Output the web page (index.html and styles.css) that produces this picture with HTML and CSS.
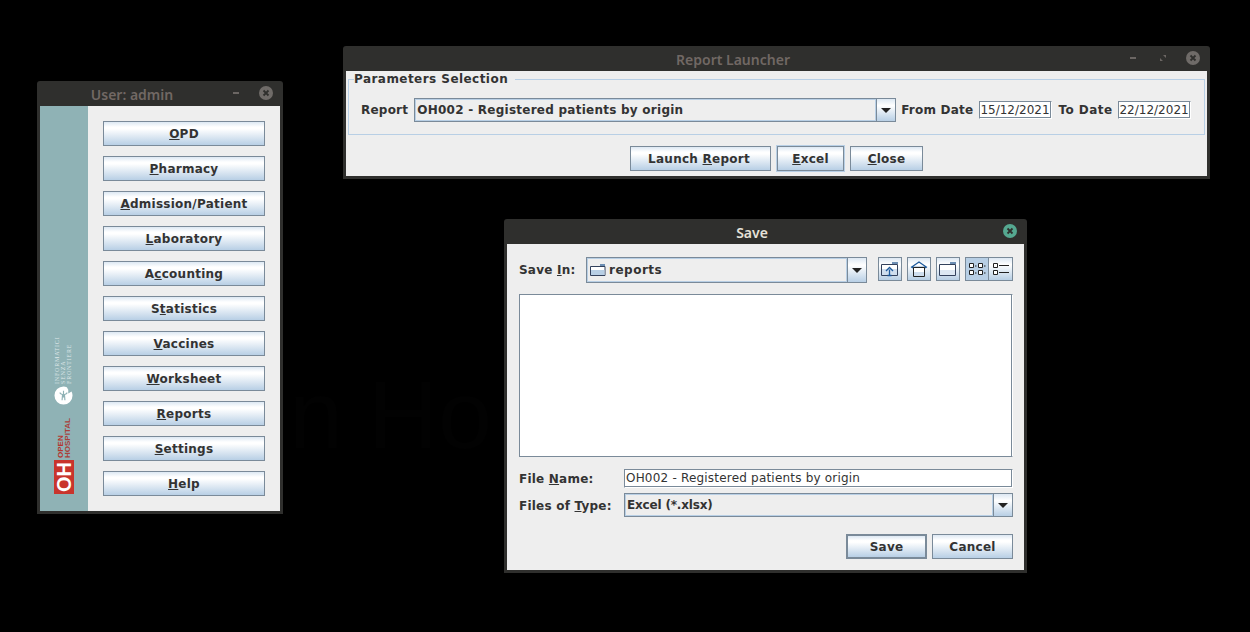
FILE: index.html
```html
<!DOCTYPE html>
<html lang="en">
<head>
<meta charset="utf-8">
<title>Open Hospital</title>
<link rel="stylesheet" href="styles.css">
</head>
<body>
<div class="wallpaper"><span>n Ho</span></div>

<section class="win win-main">
  <header class="titlebar inactive">
    <span class="title title-main">User: admin</span>
    <span class="wm wm-min"></span>
    <span class="wm-close"><svg viewBox="0 0 14 14"><path d="M4.5 4.5l5 5M9.5 4.5l-5 5"/></svg></span>
  </header>
  <div class="win-body main-body">
    <aside class="sidebar">
      <div class="isf">
        <div class="isf-text"><span>INFORMATICI</span><span>SENZA</span><span>FRONTIERE</span></div>
        <svg class="isf-mark" viewBox="0 0 20 20"><path d="M10 .5a9.500 9.500 0 1 0 9.500 9.500c0-1.500-.4-3-1-4.200L15 8V4l-1.500-2.800A9.500 9.500 0 0 0 10 .5z" fill="#fff"/><path d="M6 7c1 1.500 2 2 3 2l-.5 6M14 7c-1 1.500-2 2-3 2l.5 6M10 5v7" fill="none" stroke="#8fb2b5" stroke-width="1.200"/></svg>
      </div>
      <div class="oh">
        <div class="oh-words"><span class="oh-open">OPEN</span><span class="oh-hosp">HOSPITAL</span></div>
        <div class="oh-box"><span>OH</span></div>
      </div>
    </aside>
    <nav class="menu">
      <button class="btn"><u>O</u>PD</button>
      <button class="btn"><u>P</u>harmacy</button>
      <button class="btn"><u>A</u>dmission/Patient</button>
      <button class="btn"><u>L</u>aboratory</button>
      <button class="btn">A<u>c</u>counting</button>
      <button class="btn">S<u>t</u>atistics</button>
      <button class="btn"><u>V</u>accines</button>
      <button class="btn"><u>W</u>orksheet</button>
      <button class="btn"><u>R</u>eports</button>
      <button class="btn"><u>S</u>ettings</button>
      <button class="btn"><u>H</u>elp</button>
    </nav>
  </div>
</section>

<section class="win win-report">
  <header class="titlebar inactive">
    <span class="title title-report">Report Launcher</span>
    <span class="wm wm-min"></span>
    <span class="wm wm-max"><svg viewBox="0 0 8 8"><path d="M4 1h3v3zM4 7H1V4z"/></svg></span>
    <span class="wm-close"><svg viewBox="0 0 14 14"><path d="M4.500 4.500l5 5M9.500 4.500l-5 5"/></svg></span>
  </header>
  <div class="win-body report-body">
    <fieldset class="params">
      <legend>Parameters Selection</legend>
      <label class="lbl">Report</label>
      <div class="combo combo-report">
        <span class="combo-value">OH002 - Registered patients by origin</span>
        <span class="combo-arrow"><i></i></span>
      </div>
      <label class="lbl lbl-from">From Date</label>
      <span class="field date">15/12/2021</span>
      <label class="lbl lbl-to">To Date</label>
      <span class="field date">22/12/2021</span>
    </fieldset>
    <div class="actions actions-report">
      <button class="btn b-launch">Launch <u>R</u>eport</button>
      <button class="btn b-excel"><u>E</u>xcel</button>
      <button class="btn b-close"><u>C</u>lose</button>
    </div>
  </div>
</section>

<section class="win win-save">
  <header class="titlebar">
    <span class="title title-save">Save</span>
    <span class="wm-close active"><svg viewBox="0 0 14 14"><path d="M4.500 4.500l5 5M9.500 4.500l-5 5"/></svg></span>
  </header>
  <div class="win-body save-body">
    <div class="save-top">
      <label class="lbl lbl-savein">Save <u>I</u>n:</label>
      <div class="combo combo-dir">
        <span class="combo-value dir-value">
          <svg class="folder" viewBox="0 0 16 13"><path d="M10 1h5v2h-5z" fill="#6d8fb4"/><path d="M.5 3.500h14.500v9H.5z" fill="#fff" stroke="#33415c"/><path d="M1 7h13.500v5H1z" fill="#b8cfe5"/></svg>
          reports
        </span>
        <span class="combo-arrow"><i></i></span>
      </div>
      <div class="tools">
        <span class="tool"><svg viewBox="0 0 18 16"><path d="M11 1h6v2h-6z" fill="#6d8fb4"/><path d="M.5 3.500h16v11H.5z" fill="#fff" stroke="#33415c"/><path d="M1 8h15v6H1z" fill="#cfdeee"/><path d="M8.500 14.500V8.500M5 10l3.500-3.500L12 10M6.500 14.500h4" fill="none" stroke="#1e5a9c" stroke-width="1.300"/></svg></span>
        <span class="tool"><svg viewBox="0 0 18 16"><path d="M1 6.500L9 1l8 5.500M2 6.500h14" fill="none" stroke="#1e5a9c" stroke-width="1.300"/><path d="M3.500 6.500h11v9h-11z" fill="#fff" stroke="#222"/><path d="M4 11h10v4H4z" fill="#cfdeee"/></svg></span>
        <span class="tool"><svg viewBox="0 0 18 16"><path d="M11 1h6v2h-6z" fill="#6d8fb4"/><path d="M.5 3.500h16v11H.5z" fill="#fff" stroke="#33415c"/><path d="M1 9h15v5H1z" fill="#dde8f3"/></svg></span>
        <span class="view-toggle">
          <span class="tool tool-on"><svg viewBox="0 0 18 16"><path d="M1.500 2.500h4v4h-4zM10.500 2.500h4v4h-4zM1.500 9.500h4v4h-4zM10.500 9.500h4v4h-4z" fill="#fff" stroke="#222"/><path d="M7 5h1.500M16 5h1.500M7 12h1.500M16 12h1.500" stroke="#222"/></svg></span>
          <span class="tool tool-joined"><svg viewBox="0 0 18 16"><path d="M1.500 2.500h4v4h-4zM1.500 9.500h4v4h-4z" fill="#fff" stroke="#222"/><path d="M7 4.500h10M7 11.500h10" stroke="#222"/></svg></span>
        </span>
      </div>
    </div>
    <div class="filelist"></div>
    <div class="save-form">
      <label class="lbl"><span>File <u>N</u>ame:</span></label>
      <span class="field name-field">OH002 - Registered patients by origin</span>
      <label class="lbl lbl-type"><span>Files of <u>T</u>ype:</span></label>
      <div class="combo combo-type">
        <span class="combo-value type-value">Excel (*.xlsx)</span>
        <span class="combo-arrow"><i></i></span>
      </div>
    </div>
    <div class="actions actions-save">
      <button class="btn b-save">Save</button>
      <button class="btn b-cancel">Cancel</button>
    </div>
  </div>
</section>
</body>
</html>
```

FILE: styles.css
```css
* { box-sizing: border-box; }
html, body { margin: 0; padding: 0; }
body {
  width: 1250px;
  height: 632px;
  background: #000;
  position: relative;
  overflow: hidden;
  font-family: "DejaVu Sans", sans-serif;
  font-size: 12px;
  color: #333;
}
.wallpaper {
  position: absolute;
  left: 283px;
  top: 359px;
  width: 221px;
  overflow: hidden;
  padding-left: 6px;
  font-family: "Liberation Sans", sans-serif;
  font-size: 97px;
  line-height: 112px;
  word-spacing: -2px;
  color: #020202;
  white-space: nowrap;
}

/* windows */
.win {
  position: absolute;
  display: flex;
  flex-direction: column;
  background: #2f2f2d;
  border-radius: 3px 3px 0 0;
  padding: 0 3px 3px;
}
.win-main { left: 37px; top: 81px; width: 246px; height: 433px; }
.win-report { left: 343px; top: 46px; width: 867px; height: 133px; }
.win-save { left: 504px; top: 219px; width: 523px; height: 354px; }
.titlebar {
  height: 25px;
  flex: none;
  display: flex;
  align-items: center;
  justify-content: flex-end;
  position: relative;
}
.title {
  position: absolute;
  top: 4px;
  font-family: "Noto Sans", sans-serif;
  font-size: 14px;
  line-height: 20px;
  font-weight: 600;
  color: #e6e1d8;
  transform: translateX(-50%);
  white-space: nowrap;
}
.inactive .title { color: #716864; }
.title-main { left: 92px; }
.title-report { left: 387px; }
.title-save { left: 245px; }
.wm { width: 14px; height: 14px; position: relative; flex: none; }
.wm-min::before {
  content: "";
  position: absolute;
  left: 3px;
  top: 5px;
  width: 6px;
  height: 2px;
  background: #6b6663;
}
.win-main .wm-min { margin-right: 15px; margin-left: 4px; }
.win-report .wm-min { margin-right: 15px; }
.wm-max { margin-right: 16px; }
.wm-max svg { position: absolute; left: 3px; top: 2px; width: 8px; height: 8px; }
.wm-max path { fill: #6b6663; }
.wm-close {
  width: 14px;
  height: 14px;
  margin-right: 7px;
  margin-top: -2px;
  border-radius: 50%;
  background: #6f6b68;
  flex: none;
  display: block;
}
.wm-close svg { display: block; width: 14px; height: 14px; }
.wm-close path { stroke: #2f2f2d; stroke-width: 1.800; fill: none; }
.wm-close.active { background: #55a890; }
.win-body { flex: 1; background: #eee; min-height: 0; }

/* main menu */
.main-body { display: flex; }
.sidebar {
  width: 48px;
  flex: none;
  background: #8fb2b5;
  display: flex;
  flex-direction: column;
  justify-content: flex-end;
  padding: 0 0 17px 14px;
  gap: 15px;
}
.isf { display: flex; flex-direction: column; gap: 2px; }
.isf-text {
  writing-mode: vertical-rl;
  transform: rotate(180deg);
  font-family: "Liberation Serif", serif;
  font-size: 6px;
  line-height: 6px;
  letter-spacing: .8px;
  color: #dfe8e9;
  height: 46px;
  width: 19px;
  white-space: nowrap;
}
.isf-text span { display: block; }
.isf-mark { width: 19px; height: 19px; display: block; }
.oh { display: flex; flex-direction: column; gap: 2px; }
.oh-words {
  writing-mode: vertical-rl;
  transform: rotate(180deg);
  align-self: flex-start;
  height: 38px;
  width: 20px;
  padding: 0 3px;
  font-family: "Liberation Sans", sans-serif;
  font-weight: 700;
  font-size: 8px;
  line-height: 7px;
  white-space: nowrap;
}
.oh-words span { display: block; }
.oh-open { color: #b5352d; }
.oh-hosp { color: #a8403a; }
.oh-box {
  width: 20px;
  height: 34px;
  background: #c9342c;
  display: flex;
  align-items: center;
  justify-content: center;
}
.oh-box span {
  writing-mode: vertical-rl;
  transform: rotate(180deg);
  font-family: "Liberation Sans", sans-serif;
  font-weight: 700;
  font-size: 20px;
  line-height: 20px;
  color: #fff;
}
.menu {
  flex: 1;
  display: flex;
  flex-direction: column;
  gap: 10px;
  padding: 15px 15px 0;
}

/* controls */
.btn {
  height: 25px;
  flex: none;
  padding: 2px 0 0;
  border: 1px solid #7a8a99;
  background: linear-gradient(#dde8f3 0, #fff 22%, #fff 30%, #b8cfe5 100%);
  font: 700 12px/19px "DejaVu Sans", sans-serif;
  letter-spacing: .25px;
  color: #333;
  text-align: center;
}
.lbl { font-weight: 700; white-space: nowrap; letter-spacing: .22px; color: #333; }
.combo {
  display: flex;
  height: 24px;
  border: 1px solid #7a8a99;
  background: #fff;
  flex: none;
}
.combo-value {
  flex: 1;
  display: flex;
  align-items: center;
  padding: 0 0 1px 1px;
  border: 1px solid #b8cfe5;
  font-weight: 700;
  letter-spacing: .25px;
  white-space: nowrap;
  background: #eee;
}
.type-value { letter-spacing: -.18px; }
.combo-arrow {
  width: 19px;
  flex: none;
  border-left: 1px solid #7a8a99;
  background: linear-gradient(#dde8f3 0, #fff 30%, #b8cfe5 100%);
  display: flex;
  align-items: center;
  justify-content: center;
}
.combo-arrow i {
  width: 0;
  height: 0;
  border-left: 5px solid transparent;
  border-right: 5px solid transparent;
  border-top: 5px solid #222;
}
.field {
  display: block;
  background: #fff;
  border: 1px solid #7a8a99;
  border-right-color: #fff;
  border-bottom-color: #fff;
  box-shadow: inset -1px -1px 0 #7a8a99;
  white-space: nowrap;
  line-height: 17px;
  color: #333;
}

/* report launcher */
.report-body { display: flex; flex-direction: column; padding: 0 2px; }
.params {
  margin: 0;
  height: 64px;
  border: 1px solid #b8cfe5;
  display: flex;
  align-items: center;
  padding: 11px 0 0 12px;
}
.params legend {
  font-weight: 700;
  font-size: 12px;
  letter-spacing: .45px;
  padding: 0 7px 0 0;
  margin-left: -7px;
  line-height: 16px;
  color: #333;
}
.combo-report { width: 482px; margin-left: 6px; }
.lbl-from { margin-left: 5px; }
.date { width: 73px; height: 18px; margin-left: 6px; padding-left: 0; }
.lbl-to { margin-left: 6px; letter-spacing: .45px; }
.actions { display: flex; gap: 6px; }
.actions-report { justify-content: center; margin-top: 11px; }
.b-launch { width: 141px; padding-right: 3px; }
.b-excel { width: 67px; box-shadow: 0 0 0 1px #b8cfe5; }
.b-close { width: 73px; }

/* save dialog */
.save-body { display: flex; flex-direction: column; padding: 13px 11px 0 12px; }
.save-top { display: flex; align-items: center; height: 26px; }
.lbl-savein { width: 67px; flex: none; }
.combo-dir { width: 281px; height: 26px; }
.dir-value { gap: 3px; letter-spacing: .5px; }
.folder { width: 16px; height: 13px; flex: none; margin-left: 1px; }
.tools { display: flex; margin-left: 11px; gap: 5px; margin-top: -2px; }
.tool {
  width: 24px;
  height: 24px;
  border: 1px solid #7a8a99;
  background: linear-gradient(#dde8f3 0, #fff 30%, #b8cfe5 100%);
  display: flex;
  align-items: center;
  justify-content: center;
  flex: none;
}
.tool svg { width: 18px; height: 16px; display: block; }
.view-toggle { display: flex; }
.tool-on { background: #b8cfe5; }
.tool-joined { border-left: 0; }
.filelist {
  width: 494px;
  height: 163px;
  margin-top: 11px;
  background: #fff;
  border: 1px solid #7a8a99;
  border-right-color: #fff;
  box-shadow: inset -1px 0 0 #7a8a99;
  flex: none;
}
.save-form {
  display: grid;
  grid-template-columns: 105px 389px;
  grid-template-rows: 19px 24px;
  row-gap: 5px;
  margin-top: 12px;
  align-items: center;
}
.lbl-type { padding-top: 2px; }
.name-field { width: 389px; height: 19px; padding-left: 1px; letter-spacing: .2px; }
.combo-type { width: 389px; }
.actions-save { justify-content: flex-end; margin-top: 17px; gap: 5px; }
.b-save, .b-cancel { width: 81px; }
.b-save { border-width: 2px; }
```
